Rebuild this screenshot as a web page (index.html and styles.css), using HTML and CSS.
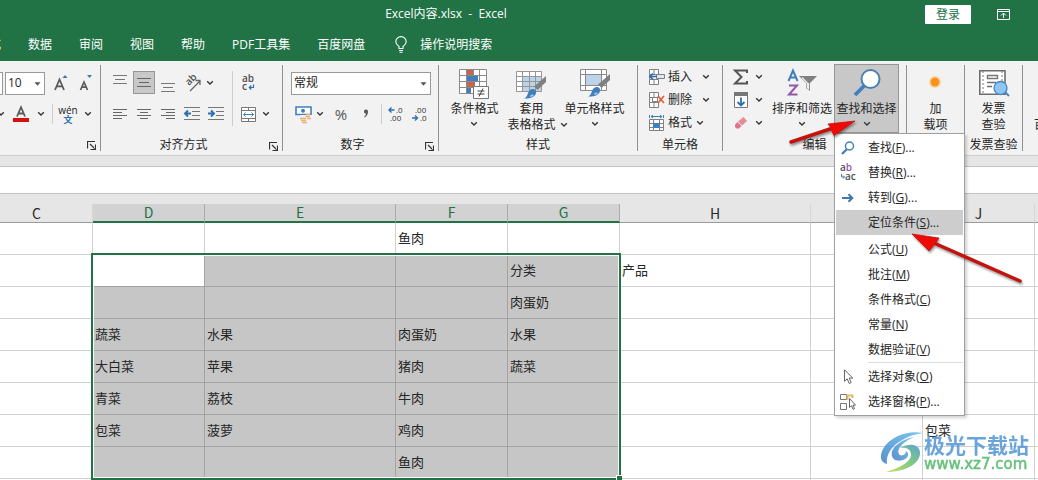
FILE: index.html
```html
<!DOCTYPE html>
<html lang="zh-CN">
<head>
<meta charset="utf-8">
<title>Excel内容.xlsx - Excel</title>
<link rel="stylesheet" href="styles.css">
</head>
<body>
<svg class="defs" aria-hidden="true">
  <symbol id="chev" viewBox="0 0 8 6"><path d="M1.2 1.2 4 4 6.8 1.2" fill="none" stroke="#333" stroke-width="1.3"/></symbol>
  <symbol id="tri" viewBox="0 0 7 4"><path d="M.5.3h6L3.500 3.700z" fill="#555"/></symbol>
  <symbol id="launch" viewBox="0 0 9 9"><path d="M.5 7.500V.5H8M3 3l4.500 4.500M8.500 3.500v5h-5" fill="none" stroke="#333" stroke-width="1.2"/></symbol>
  <symbol id="cells" viewBox="0 0 16 16"><path d="M.5.5h9v5h-9zM5 .5v5M.5 10.500h9v5h-9zM5 10.500v5M.5 5.500v5" fill="#fff" stroke="#808080"/></symbol>
  <symbol id="brush" viewBox="0 0 24 24"><path d="M24 0v6l-8.500 8-3.500-3.500z" fill="#808080"/><path d="M11.500 13c2.200.6 3.300 2.500 2.300 4.800-1.600 4-7.300 5.200-12 4.700 3.200-1.200 3.400-3.500 4.400-5.800.9-2.200 2.600-4 5.300-3.700z" fill="#3f7fbd"/><path d="M8.500 19c1-.8 2.500-.8 3.500 0-1 1.300-2.500 2-4 2 .6-.7.700-1.300.5-2z" fill="#fff" opacity=".6"/></symbol>
</svg>

<header class="titlebar">
  <h1 class="title">Excel内容.xlsx &nbsp;-&nbsp; Excel</h1>
  <div class="title-actions">
    <button class="login">登录</button>
    <button class="plain" aria-label="功能区显示选项"><svg width="13" height="11" viewBox="0 0 13 11"><path d="M.5.5h12v10H.5zM.5 2.500h12M6.500 9V4M4 6.500 6.500 4 9 6.500" fill="none" stroke="#fff"/></svg></button>
  </div>
</header>

<nav class="tabs">
  <button class="tab tab-first">公式</button>
  <button class="tab">数据</button>
  <button class="tab">审阅</button>
  <button class="tab">视图</button>
  <button class="tab">帮助</button>
  <button class="tab">PDF工具集</button>
  <button class="tab">百度网盘</button>
  <button class="tab tellme"><svg width="12" height="17" viewBox="0 0 12 17"><path d="M4 12.500v-2C2.500 9.500.8 8 .8 5.800a5.200 5.200 0 0 1 10.400 0C11.200 8 9.500 9.500 8 10.500v2zM4 14.500h4M4.500 16.300h3" fill="none" stroke="#fff" stroke-width="1.100"/></svg>操作说明搜索</button>
</nav>

<section class="ribbon">
  <div class="group g-font">
    <div class="body lines">
      <div class="line">
        <input class="fontname" aria-label="字体">
        <span class="combo size"><select aria-label="字号"><option>10</option></select><svg class="tri"><use href="#tri"/></svg></span>
        <button class="tool w25" aria-label="增大字号"><svg width="15" height="18" viewBox="0 0 15 18"><path d="M1 16 5.500 5.500 10 16M2.600 12.300h5.800" fill="none" stroke="#5a5a5a" stroke-width="1.800"/><path d="M8.500 4 11 1l2.500 3z" fill="#3c76b0"/></svg></button>
        <button class="tool w25" aria-label="减小字号"><svg width="15" height="18" viewBox="0 0 15 18"><path d="M1.500 16 5 8 8.500 16M2.800 13.200h4.500" fill="none" stroke="#5a5a5a" stroke-width="1.700"/><path d="M8 1h5l-2.500 3z" fill="#3c76b0"/></svg></button>
      </div>
      <div class="line">
        <button class="chev first" aria-label="填充颜色"><svg><use href="#chev"/></svg></button>
        <button class="tool w26" aria-label="字体颜色"><svg width="16" height="16" viewBox="0 0 16 16"><path d="M4 10.500 8 1.200l4 9.300M5.500 7.500h5" fill="none" stroke="#5a5a5a" stroke-width="1.800"/><path d="M0 12h16v4H0z" fill="#d8100c"/></svg></button>
        <button class="chev" aria-label="字体颜色选项"><svg><use href="#chev"/></svg></button>
        <i class="rule"></i>
        <button class="tool w26 wen" aria-label="拼音指南"><span>wén</span><b>文</b></button>
        <button class="chev" aria-label="拼音选项"><svg><use href="#chev"/></svg></button>
      </div>
    </div>
    <div class="foot"><span></span><button class="launcher" aria-label="字体设置"><svg><use href="#launch"/></svg></button></div>
  </div>

  <div class="group g-align">
    <div class="body split">
      <div class="align-grid">
        <button class="tool" aria-label="顶端对齐"><svg width="16" height="18" viewBox="0 0 16 18"><path d="M1 1.500h14M3 5.500h10M1 9.500h14" stroke="#777"/></svg></button>
        <button class="tool on" aria-label="垂直居中"><svg width="16" height="18" viewBox="0 0 16 18"><path d="M1 4.500h14M3 8.500h10M1 12.500h14" stroke="#666"/></svg></button>
        <button class="tool" aria-label="底端对齐"><svg width="16" height="18" viewBox="0 0 16 18"><path d="M1 9.500h14M3 13.500h10M1 17.500h14" stroke="#777"/></svg></button>
        <button class="tool" aria-label="方向"><svg width="18" height="18" viewBox="0 0 18 18"><text transform="translate(6 12) rotate(-45)" class="ab">ab</text><path d="m7 17 9.500-9.500M12.500 6.500H17V11" fill="none" stroke="#666" stroke-width="1.300"/></svg></button>
        <button class="chev" aria-label="方向选项"><svg><use href="#chev"/></svg></button>
        <button class="tool" aria-label="左对齐"><svg width="16" height="14" viewBox="0 0 16 14"><path d="M1 2.500h14M1 5.500h9M1 8.500h14M1 11.500h9" stroke="#666"/></svg></button>
        <button class="tool" aria-label="居中"><svg width="16" height="14" viewBox="0 0 16 14"><path d="M1 2.500h14M4 5.500h8M1 8.500h14M4 11.500h8" stroke="#666"/></svg></button>
        <button class="tool" aria-label="右对齐"><svg width="16" height="14" viewBox="0 0 16 14"><path d="M1 2.500h14M6 5.500h9M1 8.500h14M6 11.500h9" stroke="#666"/></svg></button>
        <button class="tool" aria-label="减少缩进"><svg width="16" height="14" viewBox="0 0 16 14"><path d="M0 .5h16M8 4.500h8M8 8.500h8M0 12.500h16" stroke="#777"/><path d="M7 6.500H1M4 3.500l-3 3 3 3" fill="none" stroke="#2f6fae" stroke-width="1.900"/></svg></button>
        <button class="tool" aria-label="增加缩进"><svg width="16" height="14" viewBox="0 0 16 14"><path d="M0 .5h16M8 4.500h8M8 8.500h8M0 12.500h16" stroke="#777"/><path d="M0 6.500h6M3 3.500l3 3-3 3" fill="none" stroke="#2f6fae" stroke-width="1.900"/></svg></button>
      </div>
      <i class="rule tall"></i>
      <div class="wrap-grid">
        <button class="tool" aria-label="自动换行"><svg width="14" height="16" viewBox="0 0 14 16"><text x="1" y="7" class="ab">ab</text><text x="1" y="15" class="ab">c</text><path d="M12.500 9.500v3H8.500M10.300 10.500 8.300 12.500l2 2" fill="none" stroke="#2f6fae" stroke-width="1.200"/></svg></button>
        <span></span>
        <button class="tool" aria-label="合并后居中"><svg width="15" height="15" viewBox="0 0 15 15"><path d="M.5.5h14v14H.5zM.5 3.500h14M.5 11.500h14M7.500.5v3M7.500 11.500v3" fill="#fff" stroke="#777"/><path d="M3 7.500h9M4.500 5.500l-2 2 2 2M10.500 5.500l2 2-2 2" fill="none" stroke="#3f7fbd"/></svg></button>
        <button class="chev" aria-label="合并选项"><svg><use href="#chev"/></svg></button>
      </div>
    </div>
    <div class="foot"><span>对齐方式</span><button class="launcher" aria-label="对齐设置"><svg><use href="#launch"/></svg></button></div>
  </div>

  <div class="group g-number">
    <div class="body lines">
      <div class="line"><span class="combo format"><select aria-label="数字格式"><option>常规</option></select><svg class="tri"><use href="#tri"/></svg></span></div>
      <div class="line">
        <button class="tool w24" aria-label="会计数字格式"><svg width="17" height="17" viewBox="0 0 17 17"><path d="M1 1h15v7.500H1z" fill="#fff" stroke="#3f7fbd" stroke-width="1.600"/><circle cx="8" cy="4.700" r="2" fill="#3f7fbd"/><path d="M5 9h12v8H5z" fill="#f1f1f1"/><path d="M11 8.500h4.500M10.500 10.500H15M5 12.500h6M12 12.500h4M6 14.500h5M7 16.400h5" stroke="#e5b477" stroke-width="1.500"/></svg></button>
        <button class="chev" aria-label="货币选项"><svg><use href="#chev"/></svg></button>
        <button class="tool percent">%</button>
        <button class="tool w24" aria-label="千位分隔样式"><svg width="8" height="10" viewBox="0 0 8 10"><path d="M2 2.500a2 2 0 0 1 4-.2C6 5.500 4.500 7.500 2.500 8.500L2 8c1.200-1 1.800-2 1.900-3.300A2 2 0 0 1 2 2.500z" fill="#555"/></svg></button>
        <i class="rule"></i>
        <button class="tool w24" aria-label="增加小数位数"><svg width="16" height="16" viewBox="0 0 16 16"><text x="8" y="7" class="dec">.0</text><text x="2" y="15" class="dec">.00</text><path d="M6.500 4H1M3.500 1.500 1 4l2.500 2.500" fill="none" stroke="#2f6fae" stroke-width="1.400"/></svg></button>
        <button class="tool w24" aria-label="减少小数位数"><svg width="16" height="16" viewBox="0 0 16 16"><text x="3" y="7" class="dec">.00</text><text x="8" y="15" class="dec">.0</text><path d="M0 12h5.500M3 9.500 5.500 12 3 14.500" fill="none" stroke="#2f6fae" stroke-width="1.400"/></svg></button>
      </div>
    </div>
    <div class="foot"><span>数字</span><button class="launcher" aria-label="数字设置"><svg><use href="#launch"/></svg></button></div>
  </div>

  <div class="group g-styles">
    <div class="body bigs">
      <button class="big"><svg width="30" height="32" viewBox="0 0 30 32"><path d="M.5 2.500h27v24H.5z" fill="#fff"/><path d="M7 3h7v5H7zM7 14h9v6H7zM7 20h5v6H7z" fill="#c8644c"/><path d="M7 8h12v6H7zM8 20h4v6H8z" fill="#3f7fbd"/><path d="M.5 2.500h27v24H.5zM.5 8.500h27M.5 14.500h27M.5 20.500h27M7.500 2.500v24M14.500 2.500v6M20.500 2.500v24" fill="none" stroke="#8a8a8a"/><path d="M14.500 19.500h15v12h-15z" fill="#fff" stroke="#777"/><path d="M18.500 24h7M18.500 27h7M24 21.500l-4 8" stroke="#444"/></svg><span>条件格式</span><svg class="ch"><use href="#chev"/></svg></button>
      <button class="big table-style"><svg width="30" height="32" viewBox="0 0 30 32"><path d="M.5 4.500h25v20H.5z" fill="#fff"/><path d="M7 10h18v14H7z" fill="#bcd3e9"/><path d="M.5 4.500h25v20H.5zM.5 9.500h25M.5 14.500h25M.5 19.500h25M6.500 4.500v20M13.500 4.500v20M19.500 4.500v20" fill="none" stroke="#969696"/><use href="#brush" x="6" y="9" width="24" height="24"/></svg><span>套用</span><span class="with-chev">表格格式<svg class="ch"><use href="#chev"/></svg></span></button>
      <button class="big"><svg width="30" height="32" viewBox="0 0 30 32"><path d="M.5 2.500h26v21H.5z" fill="#fff"/><path d="M6 8h15v10H6z" fill="#bcd3e9"/><path d="M.5 2.500h26v21H.5zM.5 7.500h26M.5 18.500h26M5.500 2.500v21M21.500 2.500v21" fill="none" stroke="#8a8a8a"/><use href="#brush" x="6" y="7" width="24" height="24"/></svg><span>单元格样式</span><svg class="ch"><use href="#chev"/></svg></button>
    </div>
    <div class="foot"><span>样式</span></div>
  </div>

  <div class="group g-cells">
    <div class="body stack">
      <button class="row"><svg width="16" height="16" viewBox="0 0 16 16"><use href="#cells"/><path d="M7.500 5.500h8v4h-8z" fill="#dce8f3" stroke="#808080"/><path d="M8 7.500H1M4 4.500l-3 3 3 3" fill="none" stroke="#2f6fae" stroke-width="1.700"/></svg>插入<svg class="ch far"><use href="#chev"/></svg></button>
      <button class="row"><svg width="16" height="16" viewBox="0 0 16 16"><use href="#cells"/><path d="M3.500 5.500h5v4h-5z" fill="#fff" stroke="#808080"/><path d="m9 4 6 7M15 4 9 11" stroke="#d9603f" stroke-width="1.700"/></svg>删除<svg class="ch far"><use href="#chev"/></svg></button>
      <button class="row"><svg width="16" height="16" viewBox="0 0 16 16"><path d="M.5 4.500h14v11H.5zM.5 8.500h14M.5 12.500h14M4.500 4.500v11M10.500 4.500v11" fill="#fff" stroke="#808080"/><path d="M4 8h7v5H4z" fill="#3f7fbd"/><path d="M.5 0v3M14.500 0v3M2 1.500h11M4 0 2 1.500 4 3M11 0l2 1.500L11 3" fill="none" stroke="#3f7fbd"/></svg>格式<svg class="ch near"><use href="#chev"/></svg></button>
    </div>
    <div class="foot"><span>单元格</span></div>
  </div>

  <div class="group g-edit">
    <div class="body edit">
      <div class="stack mini">
        <button class="row" aria-label="自动求和"><svg width="16" height="16" viewBox="0 0 16 16"><path d="M14 4V1.500H2L8.500 8 2 14.500h12V12" fill="none" stroke="#555" stroke-width="2"/></svg><svg class="ch"><use href="#chev"/></svg></button>
        <button class="row" aria-label="填充"><svg width="16" height="16" viewBox="0 0 16 16"><path d="M1.500.5h13v15h-13z" fill="#fff" stroke="#777"/><path d="M1 0h14v4H1z" fill="#777"/><path d="M8 5.500v8M4.500 10 8 13.500l3.500-3.500" fill="none" stroke="#2f6fae" stroke-width="1.800"/></svg><svg class="ch"><use href="#chev"/></svg></button>
        <button class="row" aria-label="清除"><svg width="16" height="16" viewBox="0 0 16 16"><path d="m10.500 2 3.500 4-5 4.500-4-4z" fill="#e58a97"/><path d="m4.500 7 4 4-2.500 2.500H3.500L2 12V9.500z" fill="#dc7889"/><path d="m4.500 6.500 4.500 4.500" stroke="#f8d9dd"/></svg><svg class="ch"><use href="#chev"/></svg></button>
      </div>
      <button class="big sort"><svg width="30" height="32" viewBox="0 0 30 32"><path d="M1.500 14 6 3.500 10.500 14M3 10.500h6" fill="none" stroke="#3f7fbd" stroke-width="2"/><path d="M2 18.500h8L2 27.500h8.500" fill="none" stroke="#9258a8" stroke-width="2"/><path d="M12 9h18l-7 7v8l-4-3v-5z" fill="#808080"/><path d="M15 10.500 20.300 16v4.500l1.200 1V16" fill="none" stroke="#eee" stroke-width="1.300"/></svg><span>排序和筛选</span><svg class="ch"><use href="#chev"/></svg></button>
      <div class="find-wrap">
        <button class="big find" aria-expanded="true"><svg width="30" height="32" viewBox="0 0 30 32"><path d="m3 28 9.500-9.500" stroke="#3f7fbd" stroke-width="3.800"/><circle cx="18.500" cy="12" r="9" fill="#fff" stroke="#4a7fb5" stroke-width="2"/></svg><span>查找和选择</span><svg class="ch"><use href="#chev"/></svg></button>
        <div class="menu" role="menu">
          <button role="menuitem"><svg viewBox="0 0 16 16"><path d="m2 14 5-5" stroke="#3f7fbd" stroke-width="2.300"/><circle cx="9.500" cy="6" r="4" fill="#fff" stroke="#3f7fbd" stroke-width="1.500"/></svg>查找(<u>F</u>)...</button>
          <button role="menuitem"><svg viewBox="0 0 16 16"><text x="0" y="6" class="ab">a<tspan fill="#9258a8">b</tspan></text><text x="5" y="15" class="ab">ac</text><path d="M1.500 9v3h3M3 10.500 4.500 12 3 13.500" fill="none" stroke="#3f7fbd"/></svg>替换(<u>R</u>)...</button>
          <button role="menuitem"><svg viewBox="0 0 16 16"><path d="M2 8h10M8.500 4.200 12.300 8l-3.800 3.800" fill="none" stroke="#3f76ad" stroke-width="2"/></svg>转到(<u>G</u>)...</button>
          <button role="menuitem" class="hot"><i></i>定位条件(<u>S</u>)...</button>
          <button role="menuitem" class="after"><i></i>公式(<u>U</u>)</button>
          <button role="menuitem"><i></i>批注(<u>M</u>)</button>
          <button role="menuitem"><i></i>条件格式(<u>C</u>)</button>
          <button role="menuitem"><i></i>常量(<u>N</u>)</button>
          <button role="menuitem"><i></i>数据验证(<u>V</u>)</button>
          <hr>
          <button role="menuitem"><svg viewBox="0 0 16 16"><path d="M4.500.8v11.500l2.700-2.500 2 4.700 2-.9-2-4.500h3.600z" fill="#fff" stroke="#666"/></svg>选择对象(<u>O</u>)</button>
          <button role="menuitem"><svg viewBox="0 0 16 16"><path d="M.5.5h6v5h-6zM.5 9.500h6v6h-6z" fill="#fff" stroke="#777"/><path d="M7.500 6V1.500h5V4" fill="none" stroke="#e5b96f" stroke-width="2"/><path d="M9.500 4.500v9l2-1.800 1.500 3.600 1.500-.7-1.500-3.400h2.500z" fill="#fff" stroke="#666"/></svg>选择窗格(<u>P</u>)...</button>
        </div>
      </div>
    </div>
    <div class="foot"><span>编辑</span></div>
  </div>

  <div class="group g-addin">
    <div class="body bigs">
      <button class="big"><svg width="30" height="32" viewBox="0 0 30 32"><circle cx="14" cy="15" r="6" fill="#fbd9a8"/><circle cx="14" cy="15" r="4.500" fill="#f7941d"/></svg><span>加</span><span>载项</span></button>
    </div>
  </div>
  <div class="group g-addin">
    <div class="body bigs">
      <button class="big"><svg width="30" height="32" viewBox="0 0 30 32"><path d="M.8 3.800H26v23.500H.8z" fill="#fff" stroke="#6e6e6e" stroke-width="1.600"/><path d="M4 4v23M23 4v12" stroke="#777" stroke-dasharray="2 2"/><path d="M8.500 8.500h10v3h-10z" fill="#fff" stroke="#777" stroke-width="1.400"/><path d="M8 15.500h9M8 19.500h5" stroke="#6e6e6e" stroke-width="1.600"/><path d="m26 25 4 4" stroke="#4a86bd" stroke-width="2"/><circle cx="21.500" cy="21" r="6.500" fill="#8fc5f5" stroke="#4a86bd" stroke-width="1.300"/></svg><span>发票</span><span>查验</span></button>
    </div>
    <div class="foot"><span>发票查验</span></div>
  </div>
  <div class="group g-last">
    <div class="body bigs"><button class="big"><span class="gap"></span><span>保存到</span><span>百度网盘</span></button></div>
  </div>
</section>

<div class="formula"><input aria-label="编辑栏"></div>

<main class="sheet">
  <table>
    <colgroup><col class="n"><col class="n"><col class="w"><col class="n"><col class="n"><col class="w"><col class="n"><col class="n"><col></colgroup>
    <thead><tr><th>C</th><th class="s">D</th><th class="s">E</th><th class="s">F</th><th class="s">G</th><th>H</th><th>I</th><th>J</th><th></th></tr></thead>
    <tbody>
      <tr><td></td><td></td><td></td><td>鱼肉</td><td></td><td></td><td></td><td></td><td></td></tr>
      <tr><td></td><td class="active"></td><td class="s"></td><td class="s"></td><td class="s">分类</td><td>产品</td><td></td><td></td><td></td></tr>
      <tr><td></td><td class="s"></td><td class="s"></td><td class="s"></td><td class="s">肉蛋奶</td><td></td><td></td><td></td><td></td></tr>
      <tr><td></td><td class="s">蔬菜</td><td class="s">水果</td><td class="s">肉蛋奶</td><td class="s">水果</td><td></td><td></td><td></td><td></td></tr>
      <tr><td></td><td class="s">大白菜</td><td class="s">苹果</td><td class="s">猪肉</td><td class="s">蔬菜</td><td></td><td></td><td></td><td></td></tr>
      <tr><td></td><td class="s">青菜</td><td class="s">荔枝</td><td class="s">牛肉</td><td class="s"></td><td></td><td></td><td></td><td></td></tr>
      <tr><td></td><td class="s">包菜</td><td class="s">菠萝</td><td class="s">鸡肉</td><td class="s"></td><td></td><td></td><td>包菜</td><td></td></tr>
      <tr><td></td><td class="s"></td><td class="s"></td><td class="s">鱼肉</td><td class="s"></td><td></td><td></td><td></td><td></td></tr>
      <tr><td></td><td></td><td></td><td></td><td></td><td></td><td></td><td></td><td></td></tr>
    </tbody>
  </table>
  <div class="selection"><i class="handle"></i></div>
</main>

<svg class="arrow arrow-a" width="76" height="34" viewBox="0 0 76 34" aria-hidden="true"><path d="M3 25 42 12" stroke="#c4120f" stroke-width="3.500" stroke-linecap="round"/><path d="M67 4 40 7l4 5-1 .5 3 6z" fill="#f00a06" stroke="#c4120f" stroke-width=".8"/></svg>
<svg class="arrow arrow-b" width="118" height="60" viewBox="0 0 118 60" aria-hidden="true"><path d="M110 50 24 12" stroke="#c4120f" stroke-width="3.500" stroke-linecap="round"/><path d="m2 3 27 4-4 6-6 7z" fill="#f00a06" stroke="#c4120f" stroke-width=".8"/></svg>

<div class="watermark">
  <svg width="44" height="42" viewBox="0 0 44 42" aria-hidden="true">
    <defs>
      <linearGradient id="wa" x1="0" y1="1" x2="1" y2="0"><stop stop-color="#4a86c8"/><stop offset="1" stop-color="#6cc0f2"/></linearGradient>
      <linearGradient id="wb" x1="0" y1="1" x2="1" y2="0"><stop stop-color="#c4dc50"/><stop offset=".6" stop-color="#6bbf7e"/><stop offset="1" stop-color="#4f9bd0"/></linearGradient>
    </defs>
    <path d="M43 2C27-1 10 6 3 18c-4 8-2 14 4 15-1-8 3-16 12-22 7-5 15-8 24-9z" fill="url(#wa)"/>
    <path d="M34 6C20 9 10 17 12 25c1 5 8 6 13 3 4-2 4-6 1-8 0 4-5 6-7 3-3-5 4-12 15-17z" fill="url(#wa)"/>
    <path d="M20 17c7-5 19-5 20 4 1 10-12 20-34 20 14-4 26-11 25-18-1-6-6-7-11-6z" fill="url(#wb)"/>
  </svg>
  <div class="wm-text"><strong>极光下载站</strong><span>www.xz7.com</span></div>
</div>
</body>
</html>
```

FILE: styles.css
```css
* { box-sizing: border-box; }

body {
  margin: 0;
  height: 100vh;
  overflow: hidden;
  position: relative;
  display: flex;
  flex-direction: column;
  background: #fff;
  color: #262626;
  font: 12px/16px "Open Sans", "Noto Sans CJK SC", sans-serif;
}

button, input, select {
  margin: 0;
  padding: 0;
  border: 0;
  border-radius: 0;
  background: none;
  color: inherit;
  font: inherit;
}

svg { display: block; flex: none; overflow: visible; }
.defs { position: absolute; width: 0; height: 0; overflow: hidden; }

/* Title bar and tabs */
.titlebar {
  display: flex;
  align-items: center;
  height: 28px;
  flex: none;
  background: #217346;
  color: #fff;
}
.title { flex: 1; margin: 0; font-size: 12px; font-weight: 400; text-align: center; }
.title-actions { display: flex; align-items: center; gap: 26px; margin-left: 33px; padding-right: 28px; }
.title-actions .plain { height: 14px; }
.login { width: 46px; height: 19px; background: #fff; color: #217346; line-height: 19px; border-radius: 1px; }

.tabs {
  display: flex;
  align-items: center;
  gap: 27px;
  height: 33px;
  flex: none;
  background: #217346;
  color: #fff;
  white-space: nowrap;
}
.tab { flex: none; }
.tab-first { margin-left: -23px; }
.tellme { display: flex; align-items: center; gap: 13px; margin-left: 3px; }

/* Ribbon */
.ribbon {
  display: flex;
  flex: none;
  height: 95px;
  padding: 4px 0;
  background: #f2f2f2;
  border-bottom: 1px solid #cfcfcf;
}
.group {
  display: flex;
  flex-direction: column;
  flex: none;
  height: 86px;
  border-right: 1px solid #919191;
}
.g-font { width: 101px; }
.g-align { width: 182px; }
.g-number { width: 156px; }
.g-styles { width: 199px; }
.g-cells { width: 85px; }
.g-edit { width: 184px; }
.g-addin { width: 58px; }
.g-last { flex: 1; min-width: 0; overflow: hidden; border: 0; }

.body { height: 72px; flex: none; }
.foot { display: flex; align-items: center; height: 16px; white-space: nowrap; justify-content: center; }
.foot span { flex: 1; text-align: center; }
.launcher { width: 16px; padding: 3px 0 0 3px; }
.launcher svg { width: 9px; height: 9px; }

.lines { display: flex; flex-direction: column; gap: 7px; padding-top: 6px; }
.line { display: flex; align-items: center; height: 24px; }
.tool { display: flex; align-items: center; justify-content: center; height: 24px; }
.w24 { width: 24px; }
.w25 { width: 25px; }
.w26 { width: 26px; }
.chev { display: flex; align-items: center; justify-content: center; width: 14px; height: 24px; }
.chev svg, .ch { width: 8px; height: 6px; }
.rule { width: 1px; height: 20px; background: #cdcdcd; flex: none; }
.rule.tall { height: 55px; }

.combo { position: relative; display: block; height: 23px; border: 1px solid #999; background: #fff; }
.combo select { width: 100%; height: 21px; padding: 0 2px; appearance: none; }
.tri { position: absolute; right: 3px; top: 9px; width: 7px; height: 4px; pointer-events: none; }
.fontname { width: 60px; height: 23px; margin: 0 2px 0 -57px; border: 1px solid #999; background: #fff; flex: none; }
.size { width: 40px; margin-right: 4px; }
.g-font .chev.first { margin-left: -6px; }
.g-font .rule { margin: 0 2px 0 4px; }
.wen { flex-direction: column; font-size: 10px; line-height: 10px; }
.wen b { color: #2f6fae; font-size: 9px; line-height: 9px; }

.split { display: flex; padding: 6px 0 0 7px; }
.align-grid { display: grid; grid-template-columns: repeat(5, 24px); grid-auto-rows: 24px; row-gap: 7px; }
.align-grid .chev { width: 12px; }
.on { width: 22px; height: 23px; margin-left: 1px; background: #c8c8c8; border: 1px solid #969696; }
.g-align .rule { margin: 0 4px; }
.wrap-grid { display: grid; grid-template-columns: 22px 14px; grid-auto-rows: 24px; row-gap: 7px; }

.g-number .line { padding-left: 8px; }
.format { width: 140px; }
.g-number .chev { margin-left: -2px; }
.percent { width: 26px; margin-left: 1px; font-size: 15px; color: #555; }
.g-number .rule { margin: 0 2px 0 3px; }

.ab { font: 600 10px "Open Sans", sans-serif; fill: #505050; }
.dec { font: 8px "Open Sans", sans-serif; fill: #333; }

.bigs { display: flex; justify-content: center; }
.big { display: flex; flex-direction: column; align-items: center; padding: 2px 0 0; white-space: nowrap; }
.big svg + span { margin-top: 2px; }
.big span { line-height: 16px; }
.big > .ch { margin-top: 4px; }
.g-styles .bigs { gap: 9px; padding-right: 1px; }
.with-chev { display: flex; align-items: center; gap: 4px; }
.table-style .with-chev { margin-right: -12px; }
.gap { height: 34px; }
.g-last .bigs { justify-content: flex-start; padding-left: 11px; }

.stack { display: flex; flex-direction: column; }
.row { display: flex; align-items: center; height: 23px; gap: 3px; }
.g-cells .row { padding-left: 11px; }
.far { margin-left: 7px; }
.near { margin-left: 1px; }

.edit { display: flex; }
.mini { width: 47px; padding-left: 10px; }
.mini .row { gap: 6px; }
.sort { width: 64px; }
.find-wrap { position: relative; height: 69px; margin-top: -1px; }
.find { width: 65px; height: 69px; background: #c8c8c8; border: 1px solid #969696; }

.menu {
  position: absolute;
  z-index: 2;
  top: 100%;
  left: 0;
  width: 131px;
  padding: 1px;
  background: #fff;
  border: 1px solid #a0a0a0;
  box-shadow: 2px 2px 3px rgba(0, 0, 0, .18);
}
.menu button { display: flex; align-items: center; width: 100%; height: 25px; padding-left: 4px; white-space: nowrap; }
.menu svg, .menu i { width: 16px; height: 16px; margin-right: 12px; }
.menu .hot { background: #cdcdcd; }
.menu .after { margin-top: 2px; }
.menu hr { height: 1px; margin: 0 0 1px 32px; border: 0; background: #dcdcdc; }

/* Formula bar */
.formula { flex: none; height: 48px; padding: 10px 0; background: #e6e6e6; }
.formula input { display: block; width: 100%; height: 28px; background: #fff; border: solid #c4c4c4; border-width: 1px 0; }

/* Sheet */
.sheet { position: relative; flex: 1; min-height: 0; overflow: hidden; }
.sheet table { width: calc(100% + 19px); margin-left: -19px; table-layout: fixed; border-collapse: separate; border-spacing: 0; }
.n { width: 112px; }
.w { width: 191px; }
.sheet th {
  height: 19px;
  padding: 0;
  background: #e6e6e6;
  border-right: 1px solid #d6d6d6;
  border-bottom: 1px solid #9b9b9b;
  font: 14px/17px "Noto Sans CJK SC", sans-serif;
}
.sheet th.s { background: #d2d2d2; color: #217346; border-right-color: #aaa; border-bottom: 2px solid #217346; }
.sheet td {
  height: 32px;
  padding: 0 0 2px 2px;
  border-right: 1px solid #d0d0d0;
  border-bottom: 1px solid #d0d0d0;
  font: 13px/20px "Noto Sans CJK SC", sans-serif;
  white-space: nowrap;
}
.sheet td.s { background: #c6c6c6; border-color: #a3a3a3; }
.sheet td.active { border-color: #a3a3a3; }
.sheet td:last-child, .sheet th:last-child { padding: 0; border-right: 0; }

.selection {
  position: absolute;
  left: 91px;
  top: 49px;
  width: 530px;
  height: 227px;
  border: 2px solid #217346;
  box-shadow: inset 0 0 0 1px #fff;
  pointer-events: none;
}
.handle { position: absolute; right: -3px; bottom: -3px; width: 6px; height: 6px; background: #217346; border: solid #fff; border-width: 1px 0 0 1px; }

/* Annotations */
.arrow { position: absolute; z-index: 3; fill: none; filter: drop-shadow(1px 2px 1px rgba(0, 0, 0, .4)); pointer-events: none; }
.arrow-a { left: 788px; top: 117px; }
.arrow-b { left: 910px; top: 231px; }

.watermark { position: absolute; right: 9px; bottom: 7px; display: flex; align-items: center; opacity: .9; pointer-events: none; }
.wm-text { display: flex; flex-direction: column; }
.wm-text strong { color: #5a9bd8; font: 700 21px/24px "Noto Sans CJK SC", sans-serif; }
.wm-text span { color: #55b96c; font: 15px/17px "DejaVu Sans", sans-serif; -webkit-text-stroke: 0.5px #55b96c; }
```
